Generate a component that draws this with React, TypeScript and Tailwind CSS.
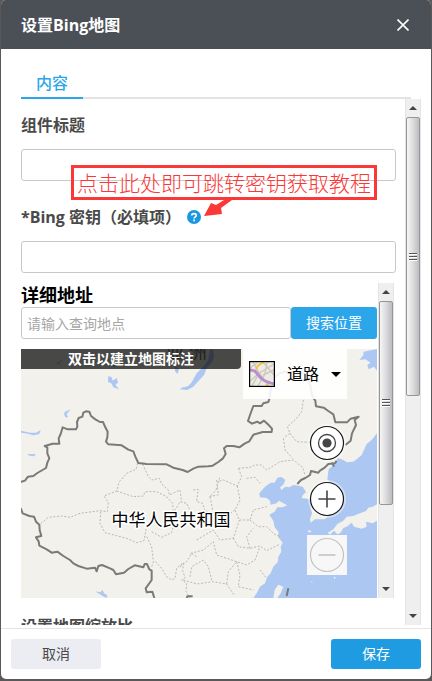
import React from "react";

const landBorders = [
  "M62,306 L75,302 84,290 100,288 112,279 138,264 142,248 148,235 142,220 142,202 134,198 158,191 178,191 176,175 182,162 188,142 203,148 228,148 232,140 231,126 236,114 247,110 250,98 258,94 268,95 273,108 286,118 300,126 309,126 316,142 323,155 322,172 318,185 325,193 365,196 385,209 400,214 406,230 415,249 440,252 500,253 520,263 548,270 563,276 580,266 595,260 625,259 638,257 655,246 668,236 677,222 672,205 680,198 700,198 718,202 735,190 748,184 760,164 788,156 815,156 816,146 803,132 792,122 780,130 772,125 756,131 744,123 750,105 760,78 785,78 790,70 805,66 808,57 812,30 821,-5 838,-20 856,-25 911,-20 925,0 931,15 937,50 946,62 948,79 971,83 985,93 1000,103 1006,127 1041,127 1052,116 1076,110 1064,120 1068,135 1056,160 1052,182 1036,195",
  "M1010,243 L1004,250 985,252 974,263 960,272 955,278 933,273 930,285 916,294 903,300 892,312",
  "M996,248 L1002,260 M62,384 L68,400 88,408 102,410 108,425 118,434 119,450 124,468 108,472 116,484 118,497 140,508 155,518 172,515 190,528 210,540 220,550 235,558 260,566 285,563 290,574 295,558 306,555 330,565 340,570 348,583 372,578 385,567 404,556 430,562 434,552 441,552 448,568 455,572 455,600 437,625 440,637 457,635 463,654 M560,654 L562,649 578,649",
  "M865,625 L860,648",
];

const provinces =
  "M413,250 L408,268 380,280 358,305 350,333 312,348 325,368 322,395 300,392 240,400 210,412 185,408 145,412 118,434 M428,252 L445,290 455,300 478,295 485,312 505,330 508,345 540,330 545,365 M350,333 L400,350 430,348 435,335 470,335 500,350 518,370 520,400 540,365 560,370 570,390 M302,395 L300,430 315,458 380,475 410,488 432,482 440,440 M440,470 L455,500 460,545 455,560 M466,545 L485,565 500,590 516,600 525,595 530,565 550,548 548,575 556,592 545,600 560,610 558,635 570,654 M455,455 L485,472 515,458 520,440 M580,330 L595,328 590,365 608,370 615,392 640,400 630,350 648,330 660,290 M650,300 L655,345 625,350 M715,265 L750,262 765,255 785,255 800,270 840,245 880,240 908,262 915,285 M715,265 L725,290 712,318 670,300 652,305 M740,295 L765,292 780,310 M712,318 L720,360 705,390 718,420 750,420 760,390 800,380 M850,175 L855,210 878,235 M862,140 L870,160 890,185 930,187 M910,60 L905,95 890,115 862,140 M856,170 L870,160 M590,480 L640,450 660,480 700,475 712,440 718,420 M700,475 L715,500 750,505 780,498 800,512 840,492 M750,420 L775,440 800,440 822,462 840,470 M710,545 L720,585 715,620 760,630 M572,520 L610,510 640,485 650,525 710,545 740,555 765,540 780,500 M550,600 L590,612 640,605 680,612 702,645 M780,570 L800,595 M570,590 L575,560 610,540 625,560 635,600 M540,560 L560,545 575,520 590,530 M680,612 L685,575 710,545 M750,505 L740,470 760,445 M660,410 L690,400 705,390";

const sea =
  "M1131,160 L1115,180 1100,192 1085,225 1072,236 1060,245 1040,247 1030,240 1014,234 1000,256 986,268 982,298 1000,320 1015,370 1008,395 985,405 975,418 945,418 932,428 930,418 936,400 932,385 938,372 930,358 905,354 908,346 918,336 908,320 895,317 880,315 868,322 856,320 844,330 840,322 850,314 856,300 845,291 832,293 824,308 812,308 795,320 778,340 780,352 800,354 810,362 812,374 830,370 836,362 862,376 848,382 832,382 824,395 808,404 820,422 824,442 836,456 834,470 848,488 842,500 844,515 835,530 834,545 820,560 812,580 802,590 795,610 780,620 770,640 760,654 1131,654 Z";

const islands = [
  "M1131,373 L1118,380 1105,383 1098,393 1080,400 1060,408 1040,410 1030,422 1012,432 1000,448 983,458 990,464 1002,452 1012,463 1022,458 1030,444 1040,440 1055,428 1062,440 1085,446 1100,440 1098,425 1118,430 1131,422 Z",
  "M835,614 L850,620 842,640 832,654 820,654 824,630 Z",
  "M924,450 L936,454 926,458 Z",
  "M1002,590 l6,3 -6,4 Z M934,604 l5,2 -5,2 Z",
];

const lakes = [
  "M62,152 L90,158 108,158 122,150 118,162 100,166 78,160 62,158 Z",
  "M82,222 L108,223 102,229 88,227 Z",
  "M640,-90 L642,-70 635,-52 620,-35 612,-15 596,2 580,20 562,30 540,28 545,23 565,18 575,7 590,-20 610,-40 625,-60 630,-93 Z",
  "M1091,-85 L1131,-93 1131,-28 1122,-40 1106,-32 1102,-45 1112,-52 1096,-62 1078,-60 1090,-74 Z",
  "M325,-12 L335,-8 338,2 350,-6 354,8 346,14 357,28 340,22 334,10 324,6 Z",
  "M195,95 L212,88 200,102 204,112 196,112 192,102 Z",
  "M285,634 L300,637 308,630 312,640 322,646 320,654 308,648 Z",
  "M336,-50 l8,-10 6,16 -8,8 Z M168,-50 l22,-12 -14,14 Z M525,-40 l12,8 -4,14 -8,-8 Z",
];

function MapCanvas() {
  return (
    <svg
      className="block h-full w-full"
      viewBox="63 -93 1068 747"
      preserveAspectRatio="xMidYMid slice"
      role="img"
      aria-label="地图"
    >
      <rect x="-1000" y="-1000" width="4000" height="3000" fill="#f2f1ec" />
      <path d={sea} fill="#abc7f2" />
      {islands.map((d) => (
        <path key={d} d={d} fill="#f2f1ec" />
      ))}
      {lakes.map((d) => (
        <path key={d} d={d} fill="#abc7f2" />
      ))}
      <path d={provinces} fill="none" stroke="#bab8b2" strokeWidth="3" strokeDasharray="6 5" />
      {landBorders.map((d) => (
        <path key={d} d={d} fill="none" stroke="#7a7a78" strokeWidth="6" strokeLinejoin="round" />
      ))}
      <text x="498" y="-62" fontSize="54" fill="#777777">
        亚 洲
      </text>
      <text
        x="513"
        y="438"
        fontSize="51"
        textAnchor="middle"
        fill="#000000"
        stroke="#ffffff"
        strokeWidth="9"
        paintOrder="stroke"
      >
        中华人民共和国
      </text>
    </svg>
  );
}

function ScrollBar({ thumb }: { thumb: string }) {
  return (
    <div className="flex w-4 shrink-0 flex-col border-x border-[#e4e4e4] bg-[#efefef]" aria-hidden="true">
      <div className="flex h-[18px] shrink-0 items-center justify-center">
        <svg width="8" height="4" viewBox="0 0 8 4">
          <path d="M4 0L8 4H0Z" fill="#444444" />
        </svg>
      </div>
      <div className="min-h-0 flex-1">
        <div
          className={
            "flex flex-col items-center justify-center gap-px rounded-xs border border-[#969696] bg-linear-to-r from-[#f6f6f6] via-[#dcdcde] to-[#bcbcc2] " +
            thumb
          }
        >
          <div className="h-0.5 w-2 border-b border-white bg-[#555555]" />
          <div className="h-0.5 w-2 border-b border-white bg-[#555555]" />
          <div className="h-0.5 w-2 border-b border-white bg-[#555555]" />
        </div>
      </div>
      <div className="flex h-[18px] shrink-0 items-center justify-center">
        <svg width="8" height="4" viewBox="0 0 8 4">
          <path d="M0 0H8L4 4Z" fill="#444444" />
        </svg>
      </div>
    </div>
  );
}

function RoadThumbnail() {
  return (
    <svg width="26" height="26" viewBox="0 0 26 26" aria-hidden="true">
      <rect width="26" height="26" fill="#ecebe6" />
      <path
        d="M1 20L12 11 25 3M4 1L10 12 20 25M14 1L25 14M9 25L16 13 18 1M1 7L8 2M14 14L25 9M3 25L8 16"
        stroke="#cdc8b8"
        strokeWidth="1.4"
        fill="none"
      />
      <path d="M7 9C8 4 11 3 15 1M17 25L21 20" stroke="#f4c04c" strokeWidth="2" fill="none" />
      <path d="M1 9C6 9 7 11 10 15C14 20 18 21 25 23" stroke="#b98fd0" strokeWidth="3" fill="none" />
      <rect x="0.5" y="0.5" width="25" height="25" fill="none" stroke="#000000" strokeWidth="1.4" />
    </svg>
  );
}

function MapPanel() {
  return (
    <div className="relative mt-2.5 h-[249px] overflow-hidden bg-[#f2f1ec]">
      <MapCanvas />
      <div className="absolute top-0 left-0 h-5 w-[220px] rounded-br bg-black/70 text-center text-sm leading-5 font-bold text-white">
        双击以建立地图标注
      </div>
      <div className="absolute top-0 right-[30px] flex flex-col items-end gap-4">
        <button
          type="button"
          className="mb-2 flex h-[50px] w-[104px] items-center bg-white/90 pl-1.5 text-base text-black"
        >
          <RoadThumbnail />
          <span className="ml-3">道路</span>
          <svg className="ml-3" width="10" height="5" viewBox="0 0 10 5" aria-hidden="true">
            <path d="M0 0H10L5 5Z" fill="#000000" />
          </svg>
        </button>
        <button type="button" aria-label="定位" className="h-10 w-10">
          <svg width="40" height="40" viewBox="0 0 40 40">
            <circle cx="20" cy="20" r="19" fill="#ffffff" opacity="0.45" />
            <circle cx="20" cy="20" r="16.5" fill="#ffffff" stroke="#1a1a1a" strokeWidth="1.2" />
            <circle cx="20" cy="20" r="8.5" fill="none" stroke="#444444" strokeWidth="1.3" />
            <circle cx="20" cy="20" r="4.6" fill="#444444" />
          </svg>
        </button>
        <button type="button" aria-label="放大" className="h-10 w-10">
          <svg width="40" height="40" viewBox="0 0 40 40">
            <circle cx="20" cy="20" r="19" fill="#ffffff" opacity="0.45" />
            <circle cx="20" cy="20" r="16.5" fill="#ffffff" stroke="#1a1a1a" strokeWidth="1.2" />
            <path d="M11.5 20H28.5M20 11.5V28.5" stroke="#444444" strokeWidth="1.6" />
          </svg>
        </button>
        <button type="button" aria-label="缩小" disabled className="h-10 w-10 bg-[#f7f7f7]">
          <svg width="40" height="40" viewBox="0 0 40 40">
            <circle cx="20" cy="20" r="16.5" fill="none" stroke="#c2c2c2" strokeWidth="1.2" />
            <path d="M11.5 20H28.5" stroke="#c2c2c2" strokeWidth="1.6" />
          </svg>
        </button>
      </div>
    </div>
  );
}

function Annotation() {
  return (
    <div className="pointer-events-none absolute top-[66px] left-[50px]">
      <div className="flex h-[35px] items-center border-3 border-[#fb3838] px-[3px] text-[21px] leading-7 font-light whitespace-nowrap text-[#fb3838]">
        点击此处即可跳转密钥获取教程
      </div>
      <svg className="ml-[133px]" width="28" height="17" viewBox="0 0 28 17" aria-hidden="true">
        <path d="M0 16L7 3L12 5L20 0H28L17 8L18 14Z" fill="#fb3838" />
      </svg>
    </div>
  );
}

const labelClass = "block text-base leading-6 font-bold text-[#4a4a4a]";
const inputClass = "h-8 w-full rounded-[3px] border border-[#c8c8c8] bg-white px-[5px] text-sm text-[#333333]";

export default function App() {
  return (
    <div className="h-screen bg-[#5a5858] px-px pb-0.5 font-['Open_Sans','Noto_Sans_CJK_SC',sans-serif]">
      <div role="dialog" aria-labelledby="title" className="flex h-full flex-col overflow-hidden rounded-[5px] bg-white">
        <header className="flex h-[49px] shrink-0 items-center justify-between bg-[#4b4f56] px-5 text-white">
          <h1 id="title" className="text-base leading-6 font-bold">
            设置Bing地图
          </h1>
          <button type="button" aria-label="关闭" className="flex h-6 w-4 items-center justify-center">
            <svg width="12" height="12" viewBox="0 0 12 12">
              <path d="M0.5 0.5L11.5 11.5M11.5 0.5L0.5 11.5" stroke="#ffffff" strokeWidth="1.6" />
            </svg>
          </button>
        </header>

        <div role="tablist" className="mx-5 flex h-[50px] shrink-0 items-end bg-linear-to-t from-[#e4e4e4] from-[2px] to-transparent to-[2px]">
          <button
            type="button"
            role="tab"
            aria-selected="true"
            className="h-7 w-[62px] border-b-2 border-[#2ba6ea] pb-0.5 text-base leading-6 font-medium text-[#2ba6ea]"
          >
            内容
          </button>
        </div>

        <div className="flex min-h-0 flex-1 gap-[9px] pr-2.5 pb-[3px] pl-5">
          <form className="relative min-w-0 flex-1 overflow-hidden pt-3.5" onSubmit={(e) => e.preventDefault()}>
            <label htmlFor="component-title" className={labelClass}>
              组件标题
            </label>
            <input id="component-title" type="text" className={"mt-3 block " + inputClass} />

            <div className="mt-6 flex items-center gap-1.5">
              <label htmlFor="bing-key" className={labelClass}>
                *Bing 密钥（必填项）
              </label>
              <a href="#help" aria-label="获取教程">
                <svg className="block" width="14" height="14" viewBox="0 0 14 14">
                  <circle cx="7" cy="7" r="7" fill="#1b98e0" />
                  <path
                    d="M4.8 5.5C4.8 2.9 9.3 2.9 9.3 5.4C9.3 6.9 7.1 6.9 7.1 8.6"
                    fill="none"
                    stroke="#ffffff"
                    strokeWidth="1.7"
                  />
                  <rect x="6.2" y="9.5" width="1.8" height="1.8" fill="#ffffff" />
                </svg>
              </a>
            </div>
            <input id="bing-key" type="text" className={"mt-3 block " + inputClass} />

            <div className="mt-2.5 mr-0.5 flex gap-px">
              <div className="min-w-0 flex-1">
                <label htmlFor="address" className="block text-lg leading-6 font-bold text-black">
                  详细地址
                </label>
                <div className="flex">
                  <input
                    id="address"
                    type="text"
                    placeholder="请输入查询地点"
                    className={"min-w-0 flex-1 placeholder:text-[#a6a6a6] " + inputClass}
                  />
                  <button type="button" className="h-8 w-[86px] rounded-[3px] bg-[#2ba6ea] text-sm text-white">
                    搜索位置
                  </button>
                </div>
                <MapPanel />
              </div>
              <ScrollBar thumb="h-[73%]" />
            </div>

            <div className={"mt-4 " + labelClass}>设置地图缩放比</div>
            <Annotation />
          </form>
          <ScrollBar thumb="h-[57%]" />
        </div>

        <footer className="flex shrink-0 justify-between border-t border-[#e4e4e4] p-2.5">
          <button type="button" className="h-[30px] w-[90px] rounded-[3px] bg-[#ebedf2] text-sm text-[#4a4a4a]">
            取消
          </button>
          <button type="button" className="h-[30px] w-[90px] rounded-[3px] bg-[#1f9ce1] text-sm text-white">
            保存
          </button>
        </footer>
      </div>
    </div>
  );
}
